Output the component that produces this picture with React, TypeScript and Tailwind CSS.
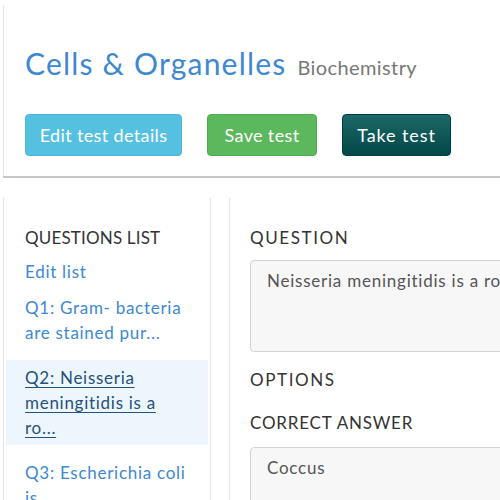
const questions = [
  { id: 1, label: "Q1: Gram- bacteria are stained pur...", active: false },
  { id: 2, label: "Q2: Neisseria meningitidis is a ro...", active: true },
  { id: 3, label: "Q3: Escherichia coli is...", active: false },
];

function Header() {
  return (
    <div className="mt-[6px] h-[170px] w-[700px] border-l border-[#e3e3e3] pl-[21px] pt-[37px] shadow-[0_2px_0_#c4c7c7]">
      <div className="flex items-baseline gap-[11px] leading-[40px]">
        <h1 className="text-[30px] tracking-[0.04em] text-[#3e88d1]">Cells &amp; Organelles</h1>
        <span className="text-[20px] tracking-[0.02em] text-[#777]">Biochemistry</span>
      </div>
      <div className="mt-[27px] flex gap-[25px] text-[18px] tracking-[0.02em] text-white">
        <button className="h-[42px] w-[157px] rounded-[4px] border border-[#46b8da] bg-[#56c0e0]">
          Edit test details
        </button>
        <button className="h-[42px] w-[110px] rounded-[4px] border border-[#4cae4c] bg-[#5cb85c]">
          Save test
        </button>
        <button className="h-[42px] w-[109px] rounded-[4px] border border-[#003f3f] bg-gradient-to-b from-[#1c6868] to-[#024848] tracking-[0.05em]">
          Take test
        </button>
      </div>
    </div>
  );
}

function Sidebar() {
  return (
    <div className="w-[208px] shrink-0 border-x border-[#e3e3e3] px-[2px] pt-[28px] tracking-[0.045em]">
      <h2 className="px-[19px] text-[17px] leading-[24px] tracking-[0.01em] text-[#333]">QUESTIONS LIST</h2>
      <a className="mt-[10px] block px-[19px] text-[17px] leading-[24px] text-[#3e88d1]">Edit list</a>
      <ul className="mt-[6px] flex flex-col gap-[10px]">
        {questions.map((q) => (
          <li
            key={q.id}
            className={
              q.active
                ? "bg-[#eef6fd] px-[19px] py-[5px] text-[17px] leading-[25px] text-[#23527c] underline underline-offset-[3px]"
                : "px-[19px] py-[5px] text-[17px] leading-[25px] text-[#3e88d1]"
            }
          >
            {q.label}
          </li>
        ))}
      </ul>
    </div>
  );
}

function Editor() {
  return (
    <div className="ml-[18px] w-[400px] shrink-0 border-l border-[#e3e3e3] pl-[20px] pt-[28px] text-[17px] leading-[24px] text-[#333]">
      <h3 className="tracking-[1.6px]">QUESTION</h3>
      <div className="mt-[10px] h-[92px] w-[380px] overflow-hidden rounded-[4px] border border-[#d3d3d3] bg-[#f7f7f7] pl-[16px] pt-[8px] whitespace-nowrap tracking-[0.045em] text-[#555]">
        Neisseria meningitidis is a rod shaped bacterium.
      </div>
      <h3 className="mt-[16px] tracking-[1.6px]">OPTIONS</h3>
      <h3 className="mt-[19px] tracking-[0.8px]">CORRECT ANSWER</h3>
      <div className="mt-[12px] h-[92px] w-[380px] rounded-[4px] border border-[#d3d3d3] bg-[#f7f7f7] pl-[16px] pt-[8px] tracking-[0.045em] text-[#555]">
        Coccus
      </div>
    </div>
  );
}

export default function App() {
  return (
    <div className="h-[500px] w-[500px] overflow-hidden bg-white pl-[3px] font-['Lato',sans-serif]">
      <Header />
      <div className="mt-[22px] flex h-[400px]">
        <Sidebar />
        <Editor />
      </div>
    </div>
  );
}
